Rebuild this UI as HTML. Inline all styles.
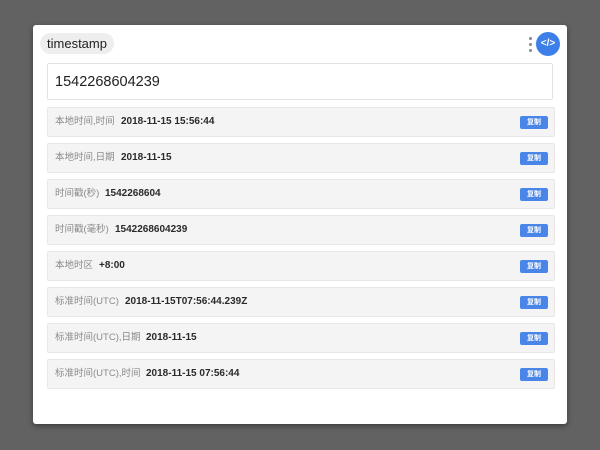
<!DOCTYPE html>
<html><head><meta charset="utf-8"><style>
html,body{margin:0;padding:0;width:600px;height:450px;background:#626262;overflow:hidden;font-family:"Liberation Sans","Noto Sans CJK SC",sans-serif}
.panel{position:absolute;left:33px;top:25px;width:534px;height:399px;background:#fff;border-radius:3px;box-shadow:0 2px 6px rgba(0,0,0,.4)}
.pill{position:absolute;left:7px;top:8px;height:21px;width:74px;background:#eeeeee;border-radius:11px;font-size:13px;line-height:21px;color:#222;text-align:center}
.dots{position:absolute;left:496px;top:12px;width:3px}
.dots i{display:block;width:3px;height:3px;border-radius:50%;background:#888;margin-bottom:3px}
.btn{position:absolute;left:503px;top:7px;width:24px;height:24px;border-radius:50%;background:#3d7fe8;color:#fff;font-size:10px;line-height:24px;text-align:center;font-weight:bold}
.input{position:absolute;left:14px;top:38px;width:506px;height:37px;border:1px solid #e2e2e2;border-radius:2px;font-size:14.5px;line-height:37px;padding-left:7px;color:#222;box-sizing:border-box}
.row{position:absolute;left:14px;width:506px;height:28px;background:#f4f4f4;border:1px solid #e8e8e8;border-radius:2px}
.row span{position:absolute;display:block;white-space:nowrap;line-height:14px;height:14px}
.row .l{left:7px;top:7px;font-size:9.5px;color:#8a8a8a}
.row .v{top:7px;font-size:10px;color:#2a2a2a;font-weight:bold}
.row .c{left:472px;top:8px;width:28px;height:13px;line-height:13px;background:#4a86e8;border-radius:2px;color:#fff;font-size:7px;text-align:center;font-weight:bold}
</style></head><body>
<div class="panel">
<div class="pill">timestamp</div>
<div class="dots"><i></i><i></i><i></i></div>
<div class="btn">&lt;/&gt;</div>
<div class="input">1542268604239</div>
<div class="row" style="top:82px"><span class="l">本地时间,时间</span><span class="v" style="left:73px">2018-11-15 15:56:44</span><span class="c">复制</span></div>
<div class="row" style="top:118px"><span class="l">本地时间,日期</span><span class="v" style="left:73px">2018-11-15</span><span class="c">复制</span></div>
<div class="row" style="top:154px"><span class="l">时间戳(秒)</span><span class="v" style="left:57px">1542268604</span><span class="c">复制</span></div>
<div class="row" style="top:190px"><span class="l">时间戳(毫秒)</span><span class="v" style="left:67px">1542268604239</span><span class="c">复制</span></div>
<div class="row" style="top:226px"><span class="l">本地时区</span><span class="v" style="left:51px">+8:00</span><span class="c">复制</span></div>
<div class="row" style="top:262px"><span class="l">标准时间(UTC)</span><span class="v" style="left:77px">2018-11-15T07:56:44.239Z</span><span class="c">复制</span></div>
<div class="row" style="top:298px"><span class="l">标准时间(UTC),日期</span><span class="v" style="left:98px">2018-11-15</span><span class="c">复制</span></div>
<div class="row" style="top:334px"><span class="l">标准时间(UTC),时间</span><span class="v" style="left:98px">2018-11-15 07:56:44</span><span class="c">复制</span></div>
</div>
</body></html>
